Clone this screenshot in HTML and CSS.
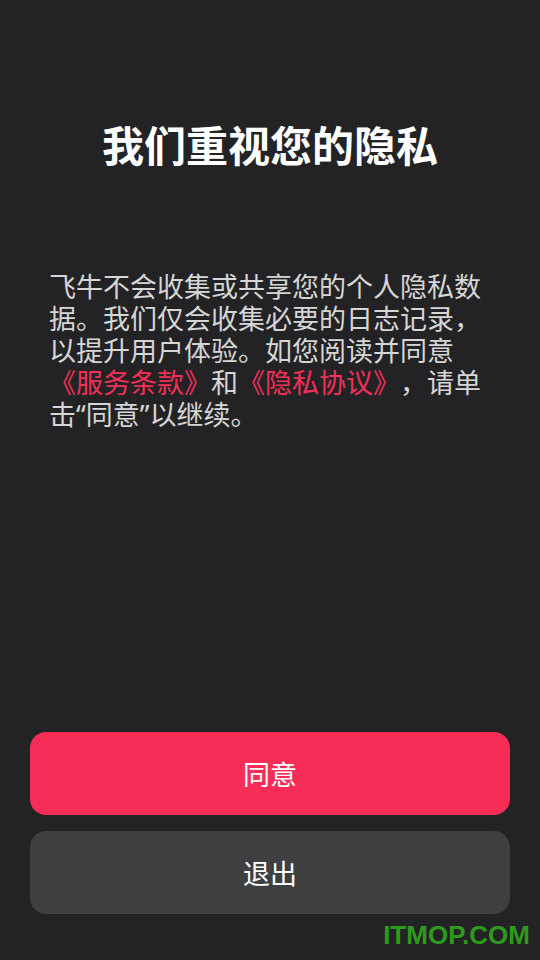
FILE: index.html
```html
<!DOCTYPE html>
<html lang="zh-CN">
<head>
    <meta charset="UTF-8">
    <meta name="viewport" content="width=device-width, initial-scale=1.0">
    <title>隐私政策</title>
    <link rel="stylesheet" href="styles.css">
</head>
<body>
    <div class="page">
        <!-- 标题 -->
        <h1 class="title">我们重视您的隐私</h1>

        <!-- 说明文字 -->
        <p class="notice">飞牛不会收集或共享您的个人隐私数据。我们仅会收集必要的日志记录，以提升用户体验。如您阅读并同意<a class="link" href="#">《服务条款》</a>和<a class="link" href="#">《隐私协议》</a>，请单击<span class="quote">“</span>同意<span class="quote">”</span>以继续。</p>

        <!-- 按钮 -->
        <div class="actions">
            <button type="button" class="btn btn-agree">同意</button>
            <button type="button" class="btn btn-exit">退出</button>
        </div>

        <div class="watermark">ITMOP.COM</div>
    </div>
</body>
</html>
```

FILE: styles.css
```css
/* 页面整体 */
body, html {
    margin: 0;
    padding: 0;
    background-color: #232325;
    font-family: "Noto Sans CJK SC", "Noto Sans", sans-serif;
}

.page {
    position: relative;
    height: 960px;
    display: flex;
    flex-direction: column;
    box-sizing: border-box;
    padding: 0 30px 46px;
}

/* 标题 */
.title {
    margin: 116px 0 0;
    color: #fff;
    font-size: 42px;
    font-weight: bold;
    line-height: 56px;
    text-align: center;
}

/* 说明 */
.notice {
    margin: 98px 19px 0;
    color: #d6d6d6;
    font-size: 27px;
    line-height: 32px;
    text-spacing-trim: space-all;
}

.quote {
    font-family: "Noto Sans", sans-serif;
}

.link {
    color: #f42f58;
    text-decoration: none;
}

/* 按钮区 */
.actions {
    margin-top: auto;
    display: flex;
    flex-direction: column;
    gap: 16px;
}

.btn {
    height: 83px;
    border: none;
    border-radius: 16px;
    color: #fff;
    font-family: inherit;
    font-size: 27px;
    cursor: pointer;
}

.btn-agree {
    background-color: #f72c57;
}

.btn-exit {
    background-color: #3f3f42;
}

/* 水印 */
.watermark {
    position: absolute;
    right: 10px;
    bottom: 9px;
    color: #2c9b1b;
    font-family: "Liberation Sans", Arial, sans-serif;
    font-size: 26px;
    font-weight: bold;
}
```
